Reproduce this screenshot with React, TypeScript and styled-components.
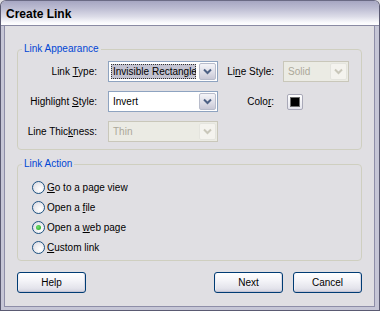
import React from "react";
import styled, { createGlobalStyle } from "styled-components";

const Global = createGlobalStyle`
  html, body { margin: 0; padding: 0; background: #e0dfe3; }
  body { font-family: "Liberation Sans", Arial, sans-serif; font-size: 10px; color: #000; }
  * { box-sizing: border-box; }
`;

const Window = styled.div`
  width: 380px;
  height: 311px;
  display: flex;
  flex-direction: column;
  border: 1px solid #5a5a72;
  border-top-color: #6a6a84;
  background: #e0dfe3;
  border-radius: 6px 6px 0 0;
  overflow: hidden;
`;

const TitleBar = styled.div`
  height: 25px;
  flex: none;
  display: flex;
  align-items: center;
  padding-left: 5px;
  background: linear-gradient(#a6a6c2 0%, #bcbcd2 30%, #dcdce8 65%, #fafafd 90%, #ffffff 100%);
  border-bottom: 1px solid #8a8aa4;
`;

const Title = styled.span`
  font-size: 12px;
  font-weight: bold;
  color: #000;
  margin-top: 1px;
`;

const Frame = styled.div`
  flex: 1;
  display: flex;
  flex-direction: column;
  border-left: 3px solid #c6c6d6;
  border-right: 4px solid #c6c6d6;
  border-bottom: 3px solid #c6c6d6;
  box-shadow: inset 1px 0 #8e8ea8, inset -1px 0 #8e8ea8, inset 0 -1px #8e8ea8;
`;

const Body = styled.div`
  flex: 1;
  display: flex;
  flex-direction: column;
  padding: 17px 13px 0 13px;
`;

const Group = styled.fieldset<{ $top?: number; $bottom?: number }>`
  margin: 0;
  padding: ${(p) => p.$top ?? 6}px 0 ${(p) => p.$bottom ?? 7}px 0;
  border: 1px solid #cfcfc0;
  border-radius: 4px;
  & + & { margin-top: 8px; }
`;

const Legend = styled.legend`
  color: #0046d5;
  padding: 0 2px;
  margin-left: 4px;
  line-height: 12px;
`;

const FormGrid = styled.div`
  display: grid;
  grid-template-columns: 90px 110px 65px 66px;
  grid-auto-rows: 21px;
  row-gap: 9px;
  align-items: center;
`;

const Label = styled.span<{ $pad?: number; $disabled?: boolean }>`
  text-align: right;
  padding-right: ${(p) => p.$pad ?? 11}px;
  white-space: nowrap;
  color: #000;
`;

const U = styled.span`
  text-decoration: underline;
`;

const Select = styled.div<{ $disabled?: boolean }>`
  height: 21px;
  display: flex;
  border: 1px solid ${(p) => (p.$disabled ? "#c9c7ba" : "#8ea3c0")};
  background: ${(p) => (p.$disabled ? "#ebebe4" : "#fff")};
  color: ${(p) => (p.$disabled ? "#aca899" : "#000")};
  overflow: hidden;
`;

const SelectValue = styled.div<{ $focus?: boolean }>`
  flex: 1;
  min-width: 0;
  margin: 2px;
  padding: 0 2px;
  display: flex;
  align-items: center;
  white-space: nowrap;
  overflow: hidden;
  background: ${(p) => (p.$focus ? "#c3c3d1" : "transparent")};
  outline: ${(p) => (p.$focus ? "1px dotted #333" : "none")};
  outline-offset: -1px;
`;

const DropButton = styled.div<{ $disabled?: boolean }>`
  width: 17px;
  flex: none;
  margin: 1px;
  display: flex;
  align-items: center;
  justify-content: center;
  border: 1px solid ${(p) => (p.$disabled ? "#e4e4de" : "#b8bccb")};
  border-radius: 2px;
  background: ${(p) =>
    p.$disabled
      ? "#f4f3ee"
      : "linear-gradient(#f4f4f8, #dcdce6 60%, #c8c8d6)"};
`;

const Chevron = ({ color }: { color: string }) => (
  <svg width="9" height="7" viewBox="0 0 9 7">
    <path d="M1 1.5 L4.5 5 L8 1.5" fill="none" stroke={color} strokeWidth="2" />
  </svg>
);

const Swatch = styled.div`
  width: 16px;
  height: 16px;
  margin-left: 4px;
  padding: 2px;
  border: 1px solid #a9a9b8;
  border-radius: 2px;
  background: linear-gradient(#ffffff, #e4e4ec);
  display: flex;
`;

const SwatchInner = styled.div<{ $color: string }>`
  flex: 1;
  background: ${(p) => p.$color};
  border: 1px solid #6c6c6c;
`;

const RadioList = styled.div`
  display: flex;
  flex-direction: column;
  padding-left: 14px;
`;

const RadioRow = styled.label`
  height: 20px;
  display: flex;
  align-items: center;
  gap: 2px;
`;

const RadioCircle = styled.span<{ $checked?: boolean }>`
  width: 13px;
  height: 13px;
  border-radius: 50%;
  border: 1px solid #1c5180;
  background: radial-gradient(circle at 65% 65%, #ffffff 0%, #ececf0 50%, #d4d4dc 100%);
  display: flex;
  align-items: center;
  justify-content: center;
  &::after {
    content: "";
    display: ${(p) => (p.$checked ? "block" : "none")};
    width: 5px;
    height: 5px;
    border-radius: 50%;
    background: radial-gradient(circle at 40% 40%, #6fe06f, #21a121);
  }
`;

const ButtonRow = styled.div`
  display: flex;
  margin-top: 11px;
  gap: 10px;
`;

const Spacer = styled.div`
  flex: 1;
`;

const Button = styled.button`
  width: 69px;
  height: 21px;
  padding: 0;
  font-family: "Liberation Sans", Arial, sans-serif;
  font-size: 10px;
  color: #000;
  border: 1px solid #003c74;
  border-radius: 3px;
  background: linear-gradient(#ffffff 0%, #f4f4f8 40%, #e4e4ec 80%, #d2d2de 100%);
  box-shadow: inset 0 -1px #c4c4d4, inset 1px 0 #eeeef4, inset -1px 0 #d8d8e4;
`;

const radios = [
  { pre: "", u: "G", post: "o to a page view", checked: false },
  { pre: "Open a ", u: "f", post: "ile", checked: false },
  { pre: "Open a ", u: "w", post: "eb page", checked: true },
  { pre: "", u: "C", post: "ustom link", checked: false },
];

export default function App() {
  return (
    <>
      <Global />
      <Window>
        <TitleBar>
          <Title>Create Link</Title>
        </TitleBar>
        <Frame>
          <Body>
            <Group>
              <Legend>Link Appearance</Legend>
              <FormGrid>
                <Label>
                  Link <U>T</U>ype:
                </Label>
                <Select>
                  <SelectValue $focus>Invisible Rectangle</SelectValue>
                  <DropButton>
                    <Chevron color="#4d6185" />
                  </DropButton>
                </Select>
                <Label $pad={9}>
                  Li<U>n</U>e Style:
                </Label>
                <Select $disabled>
                  <SelectValue>Solid</SelectValue>
                  <DropButton $disabled>
                    <Chevron color="#c9c7ba" />
                  </DropButton>
                </Select>

                <Label>
                  Highlight <U>S</U>tyle:
                </Label>
                <Select>
                  <SelectValue>Invert</SelectValue>
                  <DropButton>
                    <Chevron color="#4d6185" />
                  </DropButton>
                </Select>
                <Label $pad={9}>
                  Colo<U>r</U>:
                </Label>
                <Swatch>
                  <SwatchInner $color="#000" />
                </Swatch>

                <Label>
                  Line Thic<U>k</U>ness:
                </Label>
                <Select $disabled>
                  <SelectValue>Thin</SelectValue>
                  <DropButton $disabled>
                    <Chevron color="#c9c7ba" />
                  </DropButton>
                </Select>
              </FormGrid>
            </Group>
            <Group $top={7} $bottom={3}>
              <Legend>Link Action</Legend>
              <RadioList>
                {radios.map((r, i) => (
                  <RadioRow key={i}>
                    <RadioCircle $checked={r.checked} />
                    <span>
                      {r.pre}
                      <U>{r.u}</U>
                      {r.post}
                    </span>
                  </RadioRow>
                ))}
              </RadioList>
            </Group>
            <ButtonRow>
              <Button>Help</Button>
              <Spacer />
              <Button>Next</Button>
              <Button>Cancel</Button>
            </ButtonRow>
          </Body>
        </Frame>
      </Window>
    </>
  );
}
